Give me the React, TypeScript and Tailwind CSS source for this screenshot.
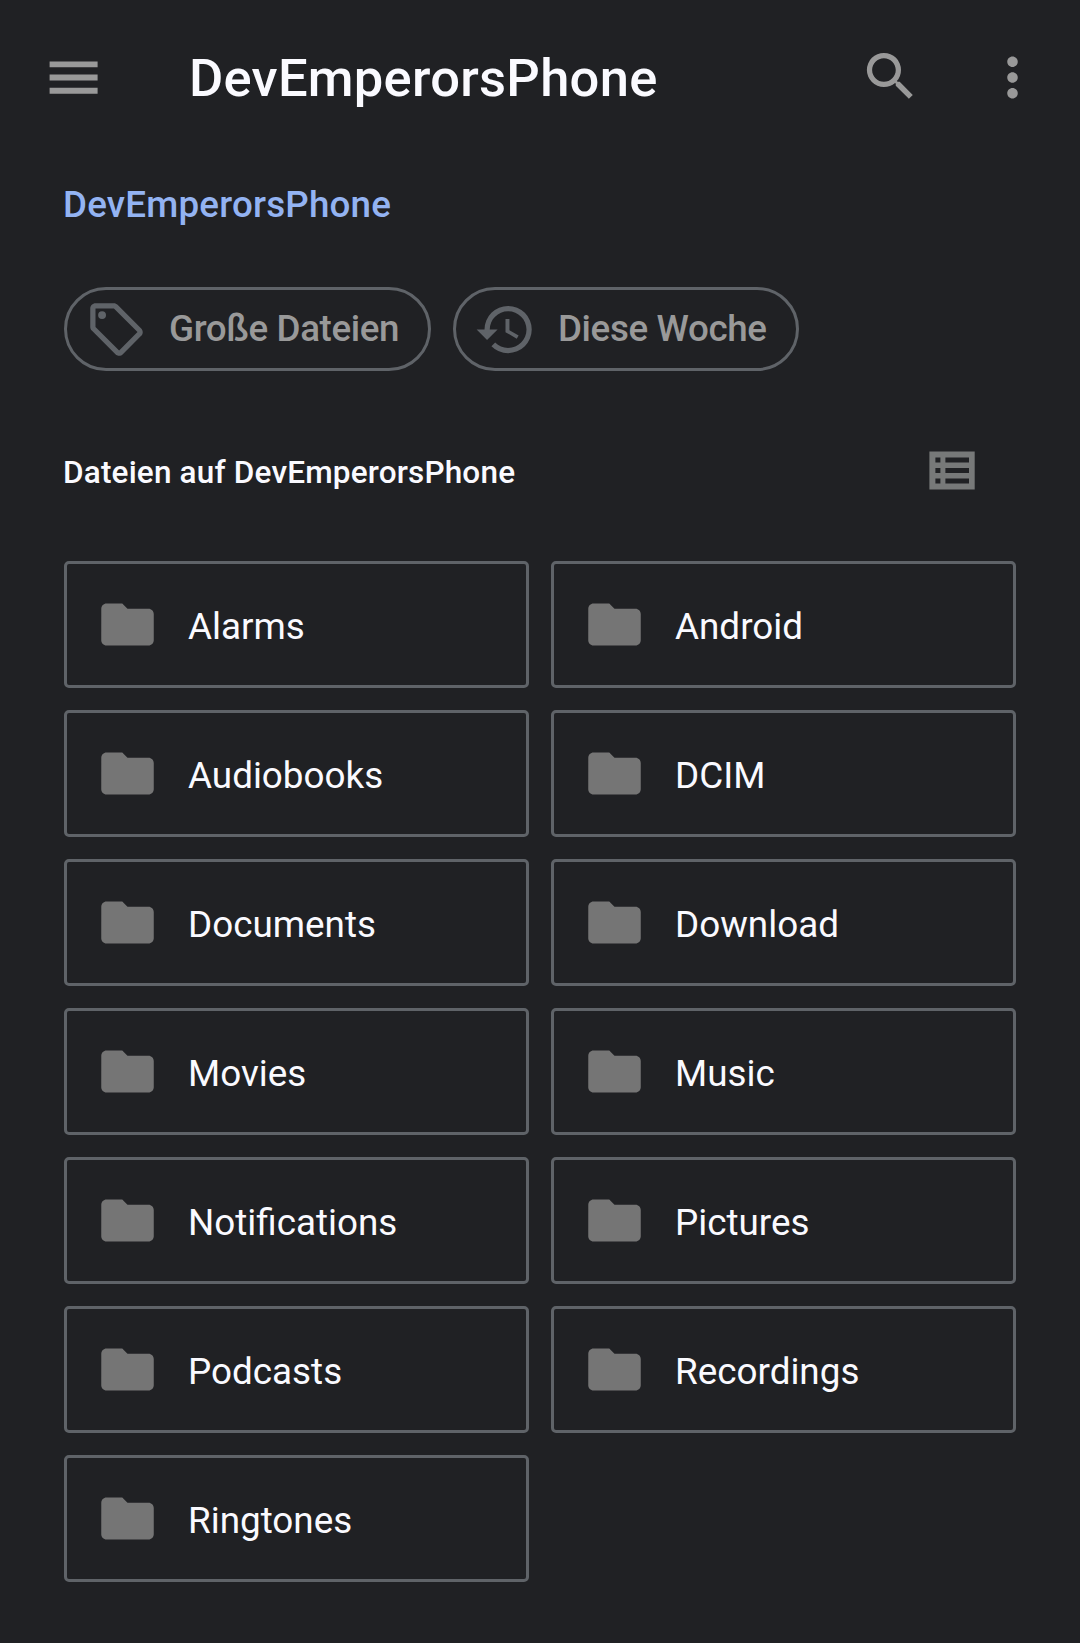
import { MdFolder, MdHistory, MdMoreVert, MdOutlineLocalOffer, MdSearch } from 'react-icons/md';

const folders = [
  'Alarms',
  'Android',
  'Audiobooks',
  'DCIM',
  'Documents',
  'Download',
  'Movies',
  'Music',
  'Notifications',
  'Pictures',
  'Podcasts',
  'Recordings',
  'Ringtones',
];

const chips = [
  { label: 'Große Dateien', Icon: MdOutlineLocalOffer, width: 'w-[367px]' },
  { label: 'Diese Woche', Icon: MdHistory, width: 'w-[346px]' },
];

function MenuIcon() {
  return (
    <svg width="63" height="63" viewBox="0 0 63 63" fill="#999999">
      <path d="M7.6 15.4h48v5.9h-48zM7.6 28.6h48v5.9h-48zM7.6 41.8h48v5.9h-48z" />
    </svg>
  );
}

function ListIcon() {
  return (
    <svg width="46" height="39" viewBox="0 0 46 39" fill="#777979">
      <path
        fillRule="evenodd"
        d="M.4.5h45.3v38H.4zM6.4 6.6v5h5v-5zM16.4 6.6v5h23.6v-5zM6.4 17v5h5v-5zM16.4 17v5h23.6v-5zM6.4 27.5v5h5v-5zM16.4 27.5v5h23.6v-5z"
      />
    </svg>
  );
}

function FolderCard({ name }: { name: string }) {
  return (
    <button className="flex h-[127px] items-center gap-[29px] rounded-[5px] border-[3px] border-[#5f6368] pl-[29px] text-left">
      <MdFolder className="size-[63px] shrink-0 text-[#757575]" />
      <span className="pt-[3px] text-[36.85px] leading-[43px] text-[#fafaff]">{name}</span>
    </button>
  );
}

export default function App() {
  return (
    <div className="h-[1643px] w-[1080px] overflow-hidden bg-[#202124] font-[Roboto,sans-serif]">
      <header className="flex h-[155px] items-center pr-9 pl-[42px] text-[#999999]">
        <MenuIcon />
        <h1 className="ml-[84px] flex-1 pt-px text-[52.5px] leading-[62px] font-medium tracking-[0.27px] text-[#fafaff]">
          DevEmperorsPhone
        </h1>
        <MdSearch className="mr-[59px] mb-[2px] size-[63px]" />
        <MdMoreVert className="size-[63px]" />
      </header>

      <nav className="flex h-[132px] pt-[28px] pl-[63px]">
        <span className="text-[36.75px] leading-[43px] font-medium tracking-[0.2px] text-[#93b3f2]">
          DevEmperorsPhone
        </span>
      </nav>

      <div className="flex gap-[22px] pl-16">
        {chips.map(({ label, Icon, width }) => (
          <button
            key={label}
            className={`flex h-[84px] items-center gap-[21px] rounded-full border-[3px] border-[#5f6368] pl-[18px] ${width}`}
          >
            <Icon className="size-[63px] shrink-0 text-[#5f6368]" />
            <span className="pb-[2px] text-[36.75px] leading-[43px] font-medium tracking-[-0.38px] whitespace-nowrap text-[#999999]">
              {label}
            </span>
          </button>
        ))}
      </div>

      <div className="flex h-[190px] items-start justify-between pt-[80px] pr-[105px] pl-[63px]">
        <h2 className="pt-[3px] text-[31.5px] leading-[37px] font-medium tracking-[0.18px] text-[#fafaff]">
          Dateien auf DevEmperorsPhone
        </h2>
        <ListIcon />
      </div>

      <main className="grid grid-cols-2 gap-[22px] px-16">
        {folders.map((name) => (
          <FolderCard key={name} name={name} />
        ))}
      </main>
    </div>
  );
}
